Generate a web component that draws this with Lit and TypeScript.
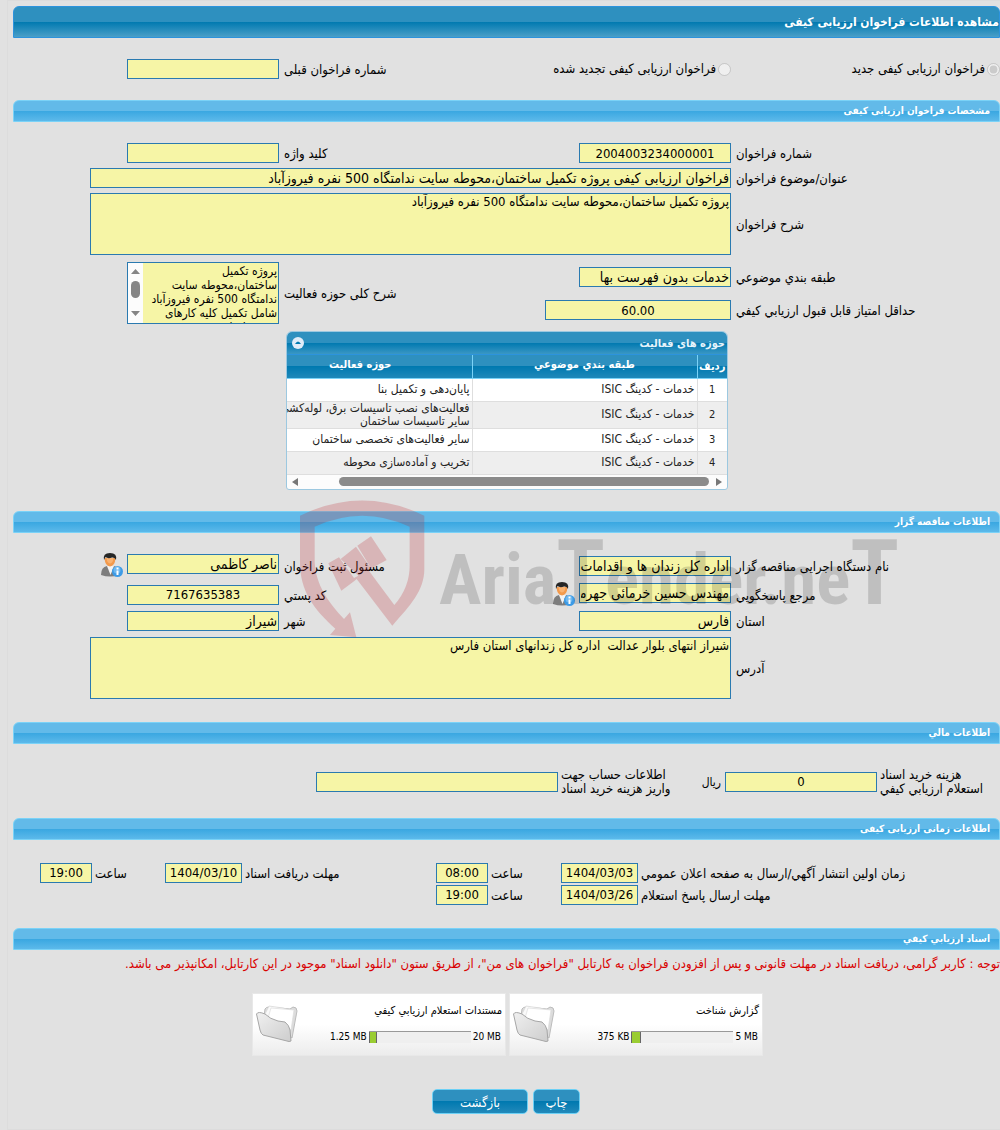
import { LitElement, html, css, svg, nothing } from "lit";
import { customElement } from "lit/decorators.js";
import { classMap } from "lit/directives/class-map.js";

interface Activity {
  category: string;
  field: string;
}

interface DocumentCard {
  title: string;
  used: string;
  limit: string;
  percent: number;
}

const activities: Activity[] = [
  { category: "خدمات - کدینگ ISIC", field: "پایان‌دهی و تکمیل بنا" },
  { category: "خدمات - کدینگ ISIC", field: "فعالیت‌های نصب تاسیسات برق، لوله‌کشی و سایر تاسیسات ساختمان" },
  { category: "خدمات - کدینگ ISIC", field: "سایر فعالیت‌های تخصصی ساختمان" },
  { category: "خدمات - کدینگ ISIC", field: "تخریب و آماده‌سازی محوطه" },
];

const documents: DocumentCard[] = [
  { title: "گزارش شناخت", used: "375 KB", limit: "5 MB", percent: 9 },
  { title: "مستندات استعلام ارزيابي كيفي", used: "1.25 MB", limit: "20 MB", percent: 8 },
];

const folderIcon = html`<svg class="folder" viewBox="0 0 42 40" aria-hidden="true">
  <defs>
    <linearGradient id="folder-front" x1="0" y1="0" x2="1" y2="1">
      <stop offset="0" stop-color="#f0f0f0" />
      <stop offset="1" stop-color="#cdcdcd" />
    </linearGradient>
  </defs>
  <path d="M8 12 L9 5 Q10 3 13 3 L34 5 L37 3 Q41 3 41 7 L36 34 L30 30 Z" fill="#dcdcdc" stroke="#bcbcbc" />
  <path d="M8 12 L13 2 L27 4 L34 6 L32 22 Z" fill="#fafafa" stroke="#d5d5d5" stroke-width=".7" />
  <path d="M12 14 L15 4 L27 5 L38 6 L35 26 L22 18 Z" fill="#fff" stroke="#dcdcdc" stroke-width=".7" />
  <path d="M0.500 10 Q2 7 9 10 Q14 15 22 17 L29 18 Q33 21 34 26 L35 37 Q33 38 31 37 L7 31 Q5 30 4 26 Z" fill="url(#folder-front)" stroke="#a6a6a6" />
</svg>`;

const personIcon = html`<svg class="person" viewBox="0 0 22 24" aria-hidden="true">
  <path d="M0 22 Q0 14 6 13 L13 13 Q18 14 18 22 Q9 25 0 22 Z" fill="#7d7d7d" />
  <path d="M6 13 L9.500 22 L13 13 Z" fill="#f4f4f4" />
  <path d="M3.500 5 Q4 13 9 13.500 Q14 13 14.500 5 Z" fill="#f39a4c" />
  <path d="M5.500 5 Q6 10 9 10.500 Q12 10 12.500 5 Z" fill="#ffc48a" opacity=".6" />
  <path d="M3 7 Q1.500 0 9 0 Q16.500 0 15 7 Q14 4 11 4.500 Q7 6 4.500 4 Z" fill="#262626" />
  <circle cx="16.500" cy="18.500" r="5.500" fill="#3d9be6" />
  <circle cx="16" cy="17" r="3.500" fill="#8fcbf7" opacity=".6" />
  <rect x="15.500" y="14.500" width="2" height="2" fill="#fff" />
  <rect x="15.500" y="17.500" width="2" height="4.500" fill="#fff" />
</svg>`;

const watermark = html`<svg class="watermark" viewBox="0 0 640 140" aria-hidden="true">
  <g class="watermark-shield" transform="scale(.3333) translate(-897 -28)">
    ${svg`<path d="M900 75 Q1087 -16 1273 75 L1273 235 C1273 300 1230 345 1177 405 L1070 265 L1062 272 L1024 300 L985 218 L1017 200 L1062 262 L1075 255 L1022 205 L1068 168 L1115 236 L1072 165 L1113 137 L1160 208 L1105 238 L1183 343 Q1229 290 1229 225 L1229 108 Q1087 42 944 108 L944 215 C948 285 985 335 1032 385 L1050 365 L1069 440 L990 433 L1006 414 C940 355 900 300 900 215 Z" />`}
  </g>
  <text class="watermark-text" x="140" y="104">Aria<tspan class="watermark-tall">T</tspan>ender.ne<tspan class="watermark-tall">T</tspan></text>
</svg>`;

@customElement("app-root")
export class AppRoot extends LitElement {
  static styles = css`
    :host {
      display: block;
      direction: rtl;
      background: #e1e1e1;
      color: #000;
      font: 13px/14px "DejaVu Sans Condensed", "DejaVu Sans", sans-serif;
    }
    * {
      box-sizing: border-box;
    }
    .page {
      margin-left: 7px;
      padding: 5px 0 15px 5px;
      border: solid #dcdcdc;
      border-width: 1px 0 1px 1px;
    }
    .title,
    .bar {
      margin: 0;
      color: #fff;
      font-weight: bold;
      border: 1px solid;
      border-radius: 6px 6px 0 0;
      display: flex;
      align-items: center;
      white-space: nowrap;
    }
    .title {
      height: 32px;
      font-size: 12px;
      border-color: #2c93dd;
      background: linear-gradient(#2e90bf 50%, #0079b0 50%, #4a9fc8);
    }
    .bar {
      height: 22px;
      padding: 0 9px;
      font-size: 10px;
      border-color: #7ad2f7;
      background: linear-gradient(#62bae9 50%, #39a7e1 50%, #5cb9ea);
    }
    .section {
      position: relative;
    }
    .form {
      display: grid;
      grid-template-columns: 269fr 300fr 152fr 266fr;
      align-items: center;
      row-gap: 5px;
    }
    .kind {
      padding: 21px 0;
    }
    .specs {
      margin-top: 21px;
    }
    .scope {
      margin-top: 7px;
      grid-template-rows: 29px 28px;
    }
    .bidder {
      margin-top: 20px;
      row-gap: 3px;
      grid-template-rows: 26px 26px 20px;
    }
    .address {
      margin-top: 6px;
    }
    .label {
      padding-top: 2px;
      padding-left: 5px;
      text-align: left;
      white-space: nowrap;
    }
    .label.tight {
      padding-left: 3px;
    }
    .label.lines {
      padding-top: 0;
    }
    .label.inline {
      padding: 0 4px 0 0;
      font-size: 12px;
      text-align: right;
    }
    .choice {
      display: flex;
      align-items: center;
      gap: 2px;
      white-space: nowrap;
    }
    .choice input {
      width: 13px;
      height: 13px;
      margin: 0;
    }
    .field,
    .area {
      display: block;
      margin: 0;
      padding: 0 1px;
      border: 1px solid #2a7ab0;
      border-radius: 0;
      outline: 0;
      background: #f6f5a6;
      color: #000;
      font: inherit;
      direction: rtl;
    }
    .field {
      width: 152px;
      height: 20px;
      font-size: 14px;
    }
    .field.number {
      font-size: 13px;
      text-align: center;
      direction: ltr;
    }
    .field.medium {
      width: 186px;
    }
    .field.large {
      width: 242px;
    }
    .field.date {
      width: 77px;
    }
    .field.time {
      width: 52px;
    }
    .wide {
      grid-column: 2 / -1;
      width: calc(100% - 77px);
    }
    .area {
      height: 62px;
      padding-top: 1px;
      resize: none;
      overflow: hidden;
    }
    .scroller {
      grid-row: 1 / 3;
      grid-column: 4;
      display: flex;
      width: 152px;
      height: 62px;
      border: 1px solid #2a7ab0;
      background: #fcfcfc;
    }
    .scroller .area {
      flex: 1;
      min-width: 0;
      height: 60px;
      border: 0;
      font-size: 12px;
    }
    .scroller-label {
      grid-row: 1 / 3;
      grid-column: 3;
    }
    .vbar {
      width: 15px;
      height: 60px;
      flex: none;
    }
    .with-icon {
      display: flex;
      align-self: start;
      align-items: flex-start;
      gap: 4px;
    }
    .with-icon .field {
      margin-top: 1px;
    }
    .info {
      padding: 0;
      border: 0;
      background: none;
      display: block;
    }
    .person {
      display: block;
      width: 22px;
      height: 24px;
    }
    .grid {
      width: 442px;
      margin: 7px 272px 21px 0;
      border: 1px solid #9cc8e0;
      border-radius: 6px 6px 3px 3px;
      overflow: hidden;
      background: #fcfcfc;
      font-size: 12px;
      line-height: 13px;
      color: #222;
    }
    .grid-title {
      height: 23px;
      padding: 0 2px 0 5px;
      display: flex;
      align-items: center;
      justify-content: space-between;
      color: #e6f3fb;
      font-size: 11px;
      font-weight: bold;
      border-bottom: 1px solid #2c93dd;
      background: linear-gradient(#2e90bf 50%, #0079b0 50%, #3a97c4);
    }
    .collapse {
      width: 12px;
      height: 12px;
      padding: 0;
      border: 0;
      background: none;
      display: flex;
    }
    .table {
      width: 479px;
      table-layout: fixed;
      border-collapse: collapse;
    }
    .table th {
      height: 23px;
      padding: 0 0 4px;
      color: #fff;
      font-size: 11px;
      border-bottom: 1px solid #7ad2f7;
      border-left: 1px solid #7ad2f7;
      background: linear-gradient(#2e90bf 50%, #0079b0 50%, #1f88b9);
    }
    .table th.index {
      padding: 0;
    }
    .table td {
      height: 23px;
      padding: 0 2px;
      border-bottom: 1px solid #dedede;
      border-left: 1px solid #dedede;
      background: #fff;
    }
    .table .even td {
      background: #eee;
    }
    .table .index {
      width: 30px;
      font-size: 11px;
      text-align: center;
    }
    .table .category {
      width: 225px;
    }
    .hbar {
      display: flex;
      align-items: center;
      justify-content: space-between;
      height: 14px;
      padding: 0 5px;
    }
    .hbar svg {
      width: 6px;
      height: 8px;
    }
    .thumb {
      width: 370px;
      height: 9px;
      margin-left: 34px;
      border-radius: 5px;
      background: #8b8b8b;
    }
    .watermark {
      position: absolute;
      top: -11px;
      left: 29%;
      width: 640px;
      height: 140px;
      pointer-events: none;
    }
    .watermark-shield {
      fill: rgba(190, 40, 50, 0.24);
    }
    .watermark-text {
      font: bold 71px "Liberation Sans Narrow", "Roboto Condensed", Roboto, sans-serif;
      fill: rgba(0, 0, 0, 0.15);
      direction: ltr;
    }
    .watermark-tall {
      font-size: 90px;
    }
    .finance {
      grid-template-columns: 123fr 152px 30px 137fr 242px 303fr;
      padding: 24px 0 22px;
    }
    .after {
      margin-top: 23px;
    }
    .times {
      grid-template-columns: 362fr 77px 73fr 52px 194fr 77px 73fr 52px 27fr;
      row-gap: 2px;
      padding: 23px 0;
    }
    .notice {
      margin: 0;
      padding: 7px 0 5px;
      color: #d90000;
      white-space: nowrap;
    }
    .cards {
      display: flex;
      justify-content: center;
      gap: 3px;
      margin-top: 17px;
      padding-left: 2px;
    }
    .card {
      display: flex;
      align-items: flex-start;
      width: 254px;
      height: 63px;
      padding: 10px 3px 0;
      background: linear-gradient(#fff 50%, #ececec);
      border: 1px solid #e8e8e8;
      font-size: 10px;
    }
    .card-body {
      flex: 1;
      display: flex;
      flex-direction: column;
      gap: 13px;
    }
    .card-title {
      font-size: 11px;
    }
    .usage {
      display: flex;
      align-items: center;
      gap: 2px;
      padding-right: 1px;
      height: 12px;
    }
    .meter {
      width: 102px;
      height: 12px;
      background: #efefef;
      border-top: 1px solid #999;
      display: flex;
      justify-content: flex-end;
    }
    .meter-fill {
      background: #9acd32;
      border: solid #666;
      border-width: 0 1px;
    }
    .folder {
      width: 42px;
      height: 40px;
      flex: none;
    }
    .actions {
      display: flex;
      justify-content: center;
      gap: 5px;
      margin-top: 33px;
      padding-right: 1px;
    }
    .button {
      min-width: 47px;
      height: 25px;
      padding: 3px 10px 0;
      border: 1px solid #6cd0f5;
      border-radius: 5px;
      color: #fff;
      font: inherit;
      background: linear-gradient(#2e90bf 50%, #0079b0 50%, #2289ba);
    }
    .button.back {
      min-width: 96px;
    }
  `;

  private input(id: string, value = "", kind = "") {
    return html`<input
      class=${classMap({ field: true, ...(kind ? Object.fromEntries(kind.split(" ").map((k) => [k, true])) : {}) })}
      id=${id}
      type="text"
      readonly
      .value=${value}
    />`;
  }

  private label(id: string, text: string, kind = "") {
    return html`<label class="label ${kind}" for=${id}>${text}</label>`;
  }

  private contact(id: string, value: string) {
    return html`<div class="with-icon">
      ${this.input(id, value)}
      <button class="info" type="button" aria-label="اطلاعات تماس">${personIcon}</button>
    </div>`;
  }

  private kindForm() {
    return html`<div class="form kind">
      <label class="choice"><input type="radio" name="kind" checked disabled />فراخوان ارزیابی کیفی جدید</label>
      <label class="choice"><input type="radio" name="kind" disabled />فراخوان ارزیابی کیفی تجدید شده</label>
      ${this.label("previous", "شماره فراخوان قبلی")} ${this.input("previous")}
    </div>`;
  }

  private activityTable() {
    return html`<div class="grid">
      <div class="grid-title">
        حوزه های فعالیت
        <button class="collapse" type="button" aria-label="بستن جدول">
          <svg viewBox="0 0 12 12"><circle cx="6" cy="6" r="6" fill="#e0ecf8" /><path d="M3 7 Q6 2 9 7Z" fill="#0079b0" /></svg>
        </button>
      </div>
      <table class="table">
        <thead>
          <tr>
            <th class="index">ردیف</th>
            <th class="category">طبقه بندي موضوعي</th>
            <th>حوزه فعالیت</th>
          </tr>
        </thead>
        <tbody>
          ${activities.map(
            (row, i) => html`<tr class=${i % 2 ? "even" : nothing}>
              <td class="index">${i + 1}</td>
              <td>${row.category}</td>
              <td>${row.field}</td>
            </tr>`,
          )}
        </tbody>
      </table>
      <div class="hbar">
        <svg viewBox="0 0 6 8"><path d="M0 0 L6 4 L0 8Z" fill="#777" /></svg>
        <div class="thumb"></div>
        <svg viewBox="0 0 6 8"><path d="M6 0 L0 4 L6 8Z" fill="#777" /></svg>
      </div>
    </div>`;
  }

  render() {
    return html`<main class="page">
      <h1 class="title">مشاهده اطلاعات فراخوان ارزیابی کیفی</h1>
      ${this.kindForm()}

      <section class="section">
        <h2 class="bar">مشخصات فراخوان ارزیابی کیفی</h2>
        <div class="form specs">
          ${this.label("number", "شماره فراخوان")} ${this.input("number", "2004003234000001", "number")}
          ${this.label("keyword", "کلید واژه")} ${this.input("keyword")}
          ${this.label("subject", "عنوان/موضوع فراخوان")}
          ${this.input("subject", "فراخوان ارزیابی کیفی پروژه تکمیل ساختمان،محوطه سایت ندامتگاه 500 نفره فیروزآباد", "wide")}
          ${this.label("description", "شرح فراخوان")}
          <textarea class="area wide" id="description" readonly .value=${"پروژه تکمیل ساختمان،محوطه سایت ندامتگاه 500 نفره فیروزآباد"}></textarea>
        </div>
        <div class="form scope">
          ${this.label("category", "طبقه بندي موضوعي")} ${this.input("category", "خدمات بدون فهرست بها")}
          ${this.label("score", "حداقل امتیاز قابل قبول ارزيابي كيفي")} ${this.input("score", "60.00", "number medium")}
          ${this.label("scope", "شرح کلی حوزه فعالیت", "scroller-label")}
          <div class="scroller">
            <textarea class="area" id="scope" readonly .value=${"پروژه تکمیل ساختمان،محوطه سایت ندامتگاه 500 نفره فیروزآباد شامل تکمیل کلیه کارهای نیمه تمام ابنیه"}></textarea>
            <svg class="vbar" viewBox="0 0 15 60" aria-hidden="true">
              <path d="M3 11 L7.500 6 L12 11Z M3 48 L7.500 53 L12 48Z" fill="#858585" />
              <rect x="3" y="18" width="9" height="17" rx="4.500" fill="#858585" />
            </svg>
          </div>
        </div>
        ${this.activityTable()}
      </section>

      <section class="section">
        <h2 class="bar">اطلاعات مناقصه گزار</h2>
        <div class="form bidder">
          ${this.label("agency", "نام دستگاه اجرایی مناقصه گزار")} ${this.input("agency", "اداره کل زندان ها و اقدامات")}
          ${this.label("registrar", "مسئول ثبت فراخوان")} ${this.contact("registrar", "ناصر کاظمی")}
          ${this.label("responder", "مرجع پاسخگويي")} ${this.contact("responder", "مهندس حسین خرمائی جهرمی")}
          ${this.label("postcode", "کد پستي")} ${this.input("postcode", "7167635383", "number")}
          ${this.label("province", "استان")} ${this.input("province", "فارس")}
          ${this.label("city", "شهر")} ${this.input("city", "شیراز")}
        </div>
        <div class="form address">
          ${this.label("address", "آدرس")}
          <textarea class="area wide" id="address" readonly .value=${"شیراز انتهای بلوار عدالت  اداره کل زندانهای استان فارس"}></textarea>
        </div>
        ${watermark}
      </section>

      <section class="section after">
        <h2 class="bar">اطلاعات مالي</h2>
        <div class="form finance">
          <label class="label tight lines" for="price">هزینه خرید اسناد<br />استعلام ارزيابي كيفي</label>
          ${this.input("price", "0", "number")}
          ${this.label("price", "ریال", "inline")}
          <label class="label tight lines" for="account">اطلاعات حساب جهت<br />واریز هزینه خرید اسناد</label>
          ${this.input("account", "", "large")}
        </div>
      </section>

      <section class="section">
        <h2 class="bar">اطلاعات زمانی ارزیابی کیفی</h2>
        <div class="form times">
          ${this.label("publish-date", "زمان اولین انتشار آگهي/ارسال به صفحه اعلان عمومي", "tight")}
          ${this.input("publish-date", "1404/03/03", "number date")}
          ${this.label("publish-time", "ساعت", "tight")} ${this.input("publish-time", "08:00", "number time")}
          ${this.label("receive-date", "مهلت دریافت اسناد", "tight")} ${this.input("receive-date", "1404/03/10", "number date")}
          ${this.label("receive-time", "ساعت", "tight")} ${this.input("receive-time", "19:00", "number time")}
          <span></span>
          ${this.label("reply-date", "مهلت ارسال پاسخ استعلام", "tight")} ${this.input("reply-date", "1404/03/26", "number date")}
          ${this.label("reply-time", "ساعت", "tight")} ${this.input("reply-time", "19:00", "number time")}
        </div>
      </section>

      <section class="section">
        <h2 class="bar">اسناد ارزيابي كيفي</h2>
        <p class="notice">
          توجه : کاربر گرامی، دریافت اسناد در مهلت قانونی و پس از افزودن فراخوان به کارتابل "فراخوان های من"، از طریق ستون "دانلود اسناد" موجود در این کارتابل، امکانپذیر می باشد.
        </p>
        <div class="cards">
          ${documents.map(
            (doc) => html`<article class="card">
              <div class="card-body">
                <div class="card-title">${doc.title}</div>
                <div class="usage">
                  <span dir="ltr">${doc.limit}</span>
                  <div class="meter"><div class="meter-fill" style="width:${doc.percent}%"></div></div>
                  <span dir="ltr">${doc.used}</span>
                </div>
              </div>
              ${folderIcon}
            </article>`,
          )}
        </div>
        <div class="actions">
          <button class="button" type="button">چاپ</button>
          <button class="button back" type="button">بازگشت</button>
        </div>
      </section>
    </main>`;
  }
}
